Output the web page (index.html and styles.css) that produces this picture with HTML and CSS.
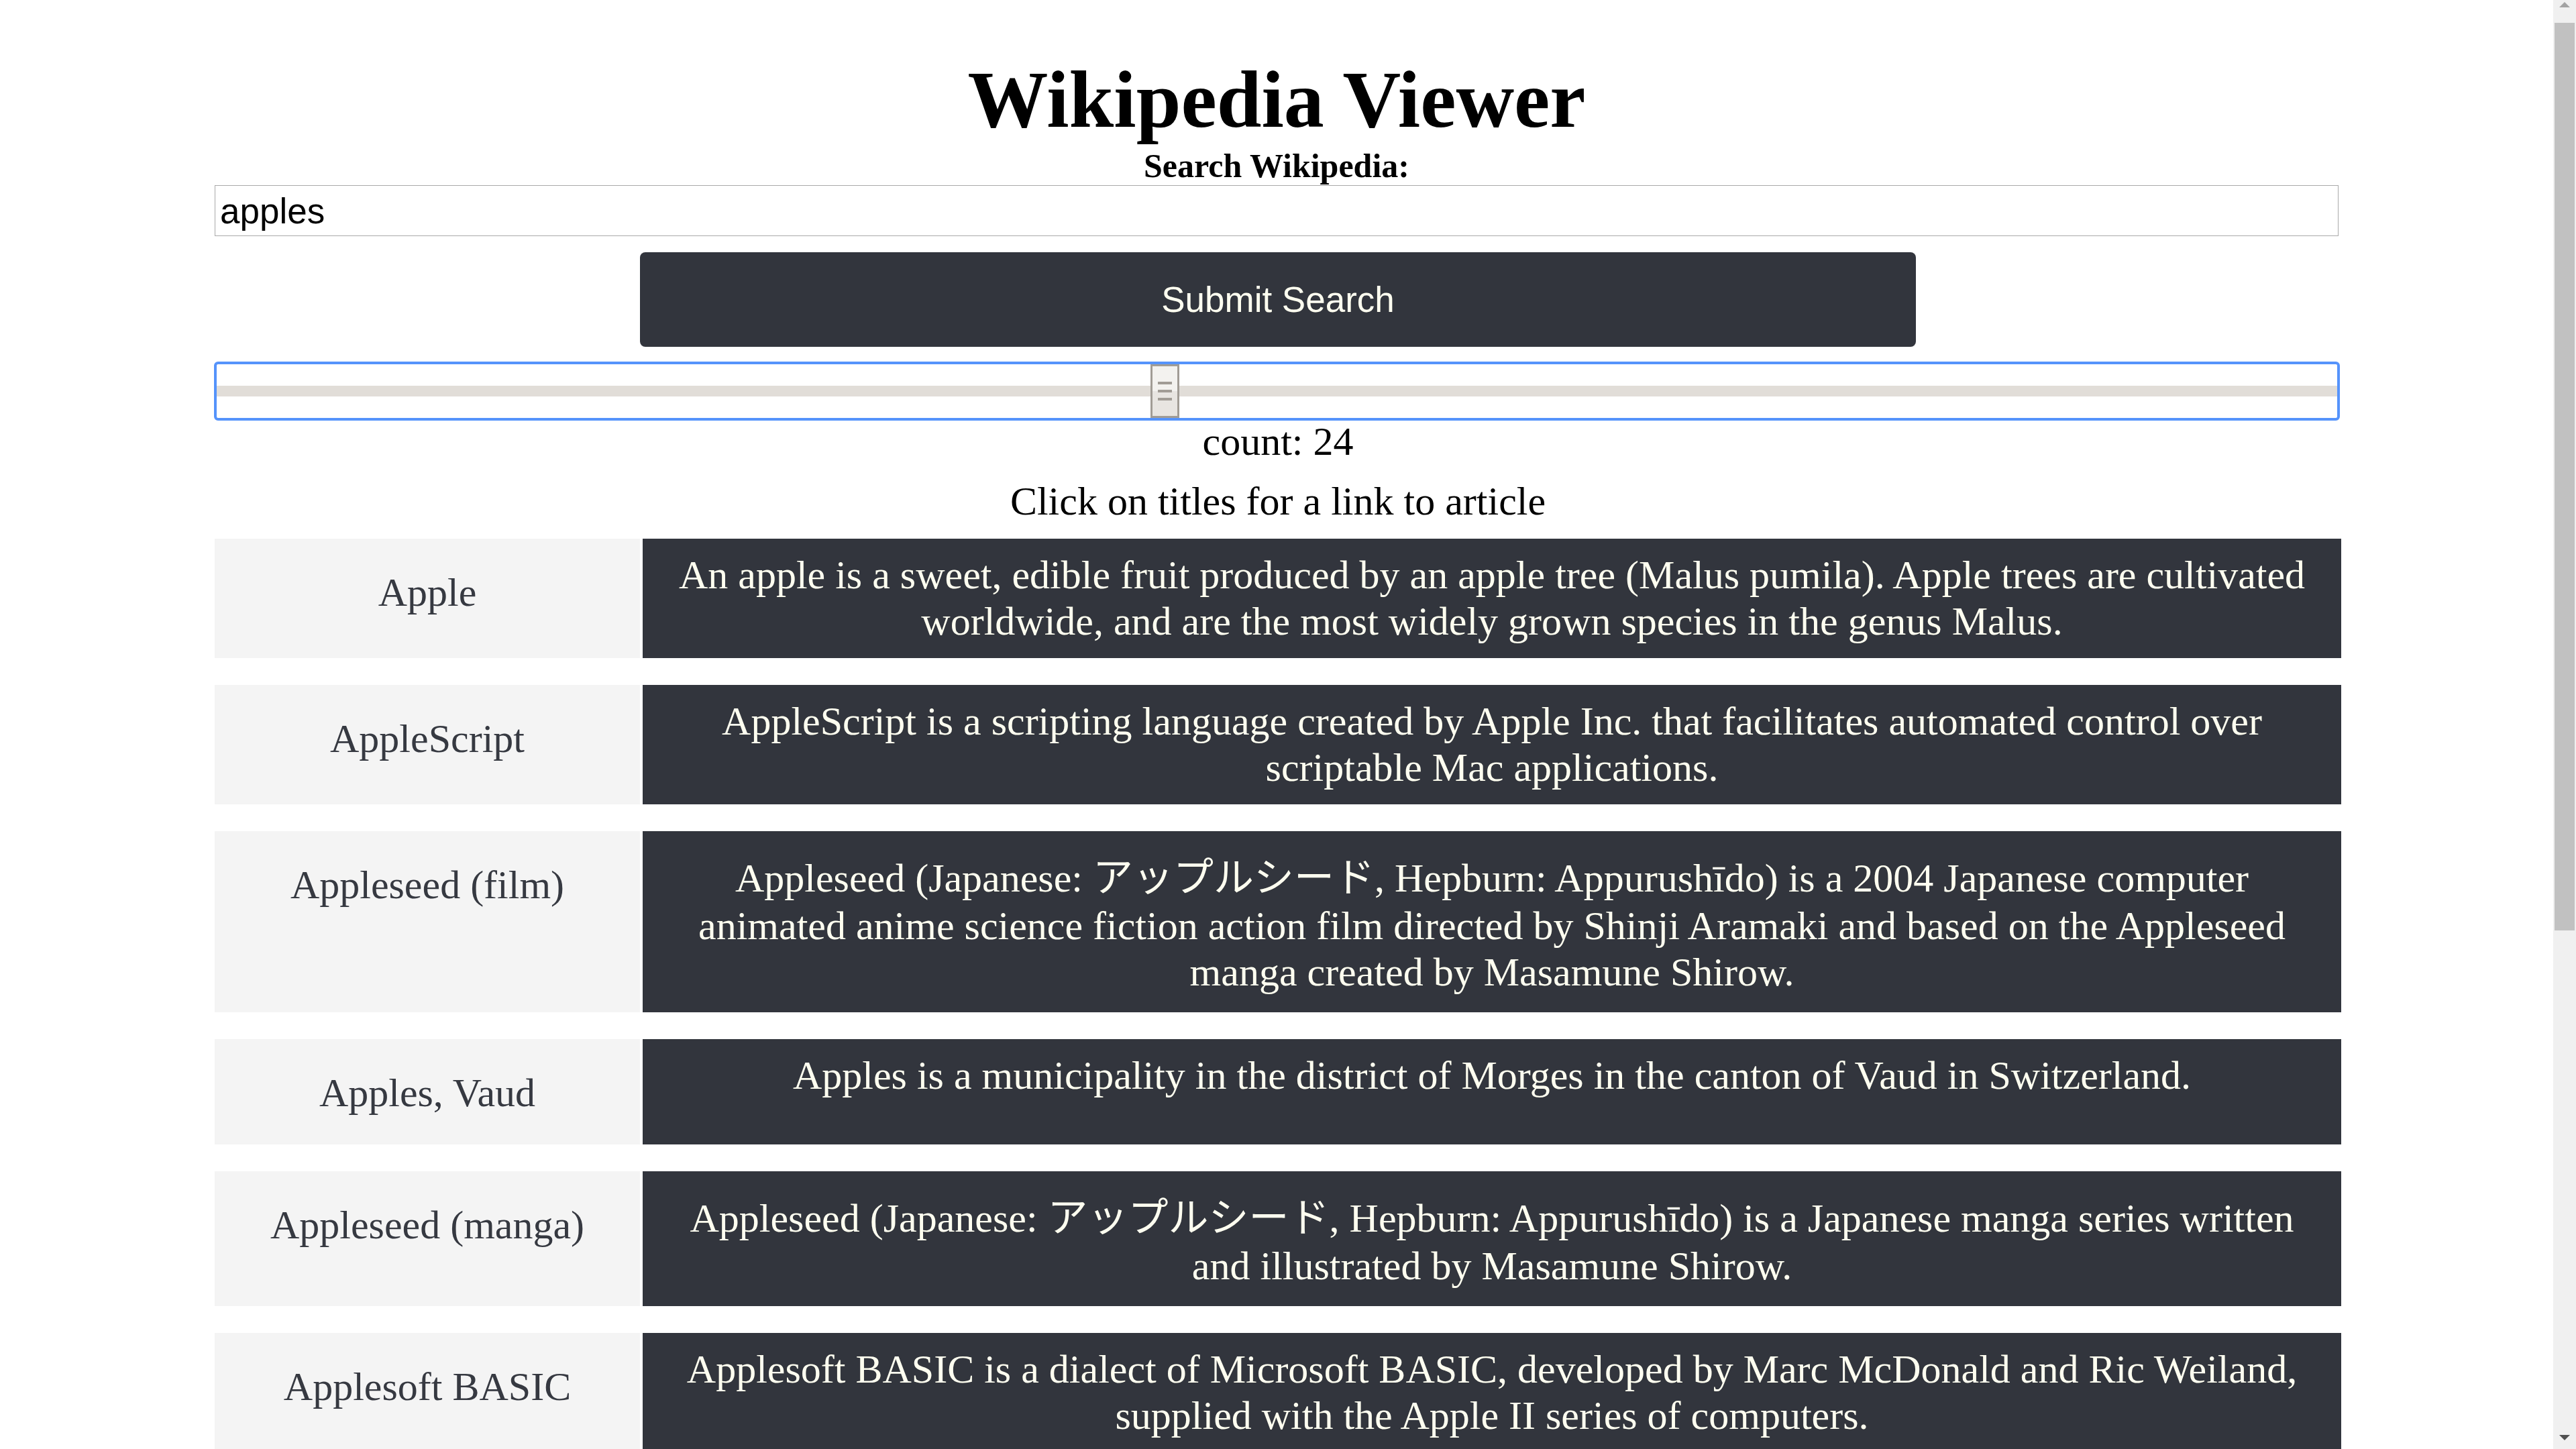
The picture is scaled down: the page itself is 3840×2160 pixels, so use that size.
FILE: index.html
```html
<!DOCTYPE html>
<html lang="en">
<head>
<meta charset="utf-8">
<title>Wikipedia Viewer</title>
<link rel="stylesheet" href="styles.css">
</head>
<body>
<div class="page">
  <header class="header">
    <h1 class="title">Wikipedia Viewer</h1>
    <label class="search-label" for="q">Search Wikipedia:</label>
  </header>
  <main class="container">
    <input id="q" class="search-input" type="text" value="apples">
    <button class="submit" type="button">Submit Search</button>
    <input class="count-range" type="range" min="0" max="53.76" step="any" value="24" aria-label="count">
    <p class="count">count: 24</p>
    <p class="hint">Click on titles for a link to article</p>
    <section class="results">
      <article class="result">
        <a class="result-title" href="#">Apple</a>
        <div class="result-desc">An apple is a sweet, edible fruit produced by an apple tree (Malus pumila). Apple trees are cultivated worldwide, and are the most widely grown species in the genus Malus.</div>
      </article>
      <article class="result">
        <a class="result-title" href="#">AppleScript</a>
        <div class="result-desc">AppleScript is a scripting language created by Apple Inc. that facilitates automated control over scriptable Mac applications.</div>
      </article>
      <article class="result">
        <a class="result-title" href="#">Appleseed (film)</a>
        <div class="result-desc result-desc-cjk">Appleseed (Japanese: アップルシード, Hepburn: Appurushīdo) is a 2004 Japanese computer animated anime science fiction action film directed by Shinji Aramaki and based on the Appleseed manga created by Masamune Shirow.</div>
      </article>
      <article class="result">
        <a class="result-title" href="#">Apples, Vaud</a>
        <div class="result-desc">Apples is a municipality in the district of Morges in the canton of Vaud in Switzerland.</div>
      </article>
      <article class="result">
        <a class="result-title" href="#">Appleseed (manga)</a>
        <div class="result-desc result-desc-cjk">Appleseed (Japanese: アップルシード, Hepburn: Appurushīdo) is a Japanese manga series written and illustrated by Masamune Shirow.</div>
      </article>
      <article class="result">
        <a class="result-title" href="#">Applesoft BASIC</a>
        <div class="result-desc">Applesoft BASIC is a dialect of Microsoft BASIC, developed by Marc McDonald and Ric Weiland, supplied with the Apple II series of computers.</div>
      </article>
    </section>
  </main>
</div>
<div class="scrollbar" aria-hidden="true">
  <svg class="scroll-arrow" width="34" height="24" viewBox="0 0 34 24"><polygon points="9,21 25,21 17,13" fill="#a3a3a3"/></svg>
  <div class="scroll-thumb"></div>
  <svg class="scroll-arrow scroll-arrow-down" width="34" height="24" viewBox="0 0 34 24"><polygon points="9,3 25,3 17,11" fill="#505050"/></svg>
</div>
</body>
</html>
```

FILE: styles.css
```css
html {
  overflow: hidden;
}

body {
  margin: 0;
  background: #ffffff;
  font-family: "Liberation Serif", "Noto Sans CJK JP", serif;
  color: #000000;
}

.page {
  width: 3806px;
}

.header {
  text-align: center;
}

.title {
  margin: 80px 0 0;
  font-size: 120px;
  font-weight: bold;
  line-height: normal;
}

.search-label {
  display: block;
  font-size: 50px;
  font-weight: bold;
  line-height: normal;
}

.container {
  width: 3170px;
  margin-left: 320px;
}

.search-input {
  display: block;
  box-sizing: border-box;
  width: 3166px;
  height: 76px;
  margin: 0;
  padding: 0 7px;
  border: 1px solid #a9a9a9;
  border-radius: 0;
  font-family: "Liberation Sans", Arial, sans-serif;
  font-size: 53px;
  color: #000000;
  background: #ffffff;
  outline: none;
}

.submit {
  display: block;
  width: 60%;
  height: 141px;
  margin: 24px auto 0;
  border: none;
  border-radius: 8px;
  background: #32353d;
  color: #fffff0;
  font-family: "Liberation Sans", Arial, sans-serif;
  font-size: 53px;
  cursor: pointer;
}

.count-range {
  -webkit-appearance: none;
  appearance: none;
  display: block;
  box-sizing: border-box;
  width: 3161px;
  height: 80px;
  margin: 26px 0 0 3px;
  padding: 0;
  border: none;
  border-radius: 2px;
  background: #ffffff;
  outline: 4px solid #5593fb;
}

.count-range::-webkit-slider-runnable-track {
  height: 16px;
  background: #e1ddd8;
  border: none;
}

.count-range::-webkit-slider-thumb {
  -webkit-appearance: none;
  appearance: none;
  box-sizing: border-box;
  width: 43px;
  height: 80px;
  margin-top: -32px;
  border: 3px solid #a19c95;
  border-radius: 0;
  background:
    linear-gradient(#a19c95, #a19c95) 8px 23px / 21px 4px no-repeat,
    linear-gradient(#a19c95, #a19c95) 8px 35px / 21px 4px no-repeat,
    linear-gradient(#a19c95, #a19c95) 8px 47px / 21px 4px no-repeat,
    linear-gradient(#f3f2ef 0%, #f3f2ef 50%, #e8e5e1 50%, #e8e5e1 100%);
}

.count {
  margin: 1px 0 0;
  font-size: 60px;
  line-height: normal;
  text-align: center;
}

.hint {
  margin: 20px 0 0;
  font-size: 60px;
  line-height: normal;
  text-align: center;
}

.results {
  display: flex;
  flex-direction: column;
  gap: 40px;
  margin-top: 21px;
}

.result {
  display: flex;
  gap: 4px;
}

.result-title {
  flex: 0 0 20%;
  box-sizing: border-box;
  padding: 46px 10px 42px;
  background: #f4f4f4;
  color: #363941;
  font-size: 60px;
  line-height: normal;
  text-align: center;
  text-decoration: none;
}

.result-desc {
  flex: 1 1 auto;
  padding: 20px 40px;
  background: #32353d;
  color: #fffff0;
  font-size: 60px;
  line-height: normal;
  text-align: center;
}

.result-desc-cjk {
  padding-bottom: 25px;
}

.scrollbar {
  position: fixed;
  top: 0;
  right: 0;
  width: 34px;
  height: 2160px;
  background: #f0f0f0;
  display: flex;
  flex-direction: column;
}

.scroll-arrow {
  display: block;
  flex: 0 0 auto;
  margin-top: -10px;
}

.scroll-thumb {
  flex: 0 0 auto;
  height: 1353px;
  margin: 20px 2px 0 2px;
  background: #c1c1c1;
}

.scroll-arrow-down {
  margin-top: auto;
  margin-bottom: 0;
}
```
